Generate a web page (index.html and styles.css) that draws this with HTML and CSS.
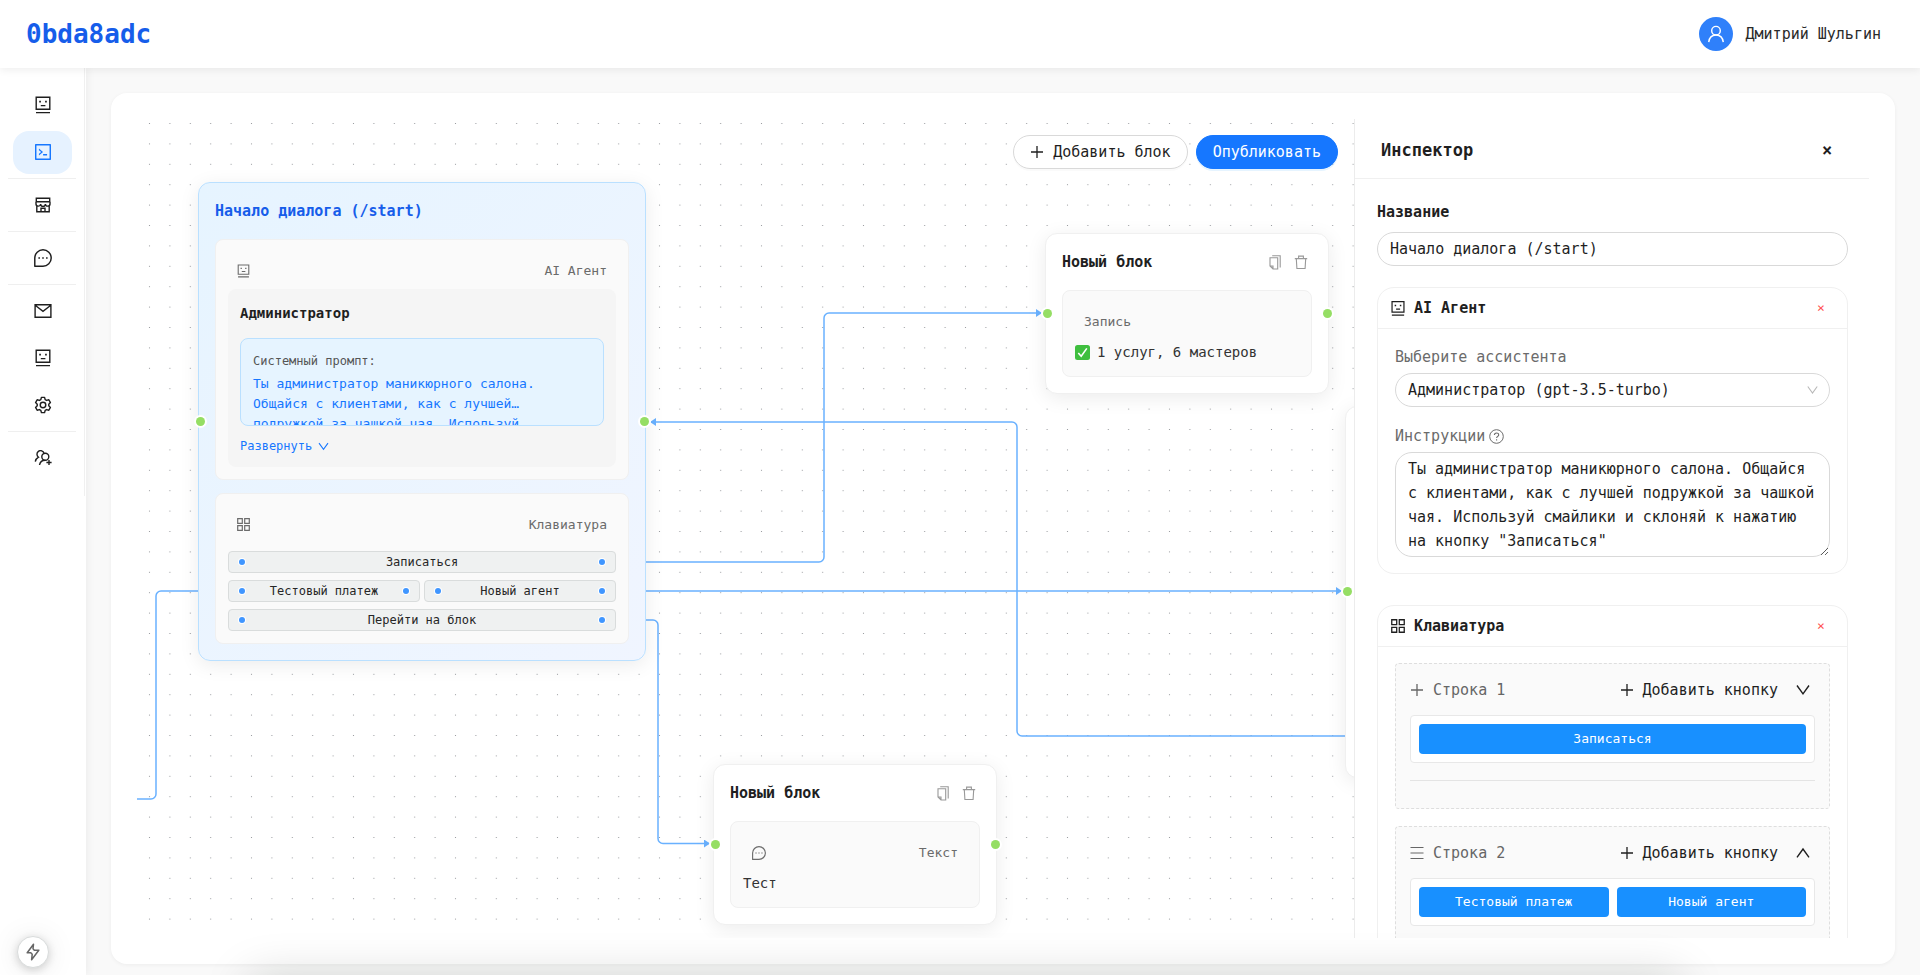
FILE: index.html
```html
<!DOCTYPE html>
<html lang="ru">
<head>
<meta charset="utf-8">
<title>0bda8adc</title>
<link rel="stylesheet" href="styles.css">
</head>
<body>
<svg class="sprite" aria-hidden="true">
  <symbol id="i-bot" viewBox="0 0 16 18"><path d="M1.2 1.2h13.6v12H1.2z M1 16.6h14 M5.8 9.6h4.6" fill="none" stroke="currentColor" stroke-width="1.4"/><path d="M4.2 4.8h1.7v1.7H4.2zM10.1 4.8h1.7v1.7h-1.7z" fill="currentColor"/></symbol>
  <symbol id="i-code" viewBox="112 112 800 800"><path fill="currentColor" d="M516 673c0 4.400 3.400 8 7.500 8h185c4.100 0 7.500-3.600 7.500-8v-48c0-4.400-3.400-8-7.500-8h-185c-4.100 0-7.500 3.600-7.500 8v48zm-194.900 6.100l192-161c3.800-3.200 3.800-9.100 0-12.300l-192-160.900A7.950 7.950 0 00308 351v62.700c0 2.400 1 4.600 2.900 6.100L420.700 512l-109.800 92.200a8.100 8.100 0 00-2.900 6.100V673c0 6.800 7.900 10.500 13.100 6.100zM880 112H144c-17.700 0-32 14.300-32 32v736c0 17.700 14.300 32 32 32h736c17.700 0 32-14.300 32-32V144c0-17.700-14.300-32-32-32zm-40 728H184V184h656v656z"/></symbol>
  <symbol id="i-shop" viewBox="0 0 16 16"><path d="M1.300 5V1.200h13.400V5M1 4.700h14M1 4.700v2a2.300 2.300 0 0 0 4.600.3 2.400 2.400 0 0 0 4.800 0A2.300 2.300 0 0 0 15 6.700v-2M1.800 8.800v5.900h12.400V8.800M6 14.500v-3.300h4v3.300" fill="none" stroke="currentColor" stroke-width="1.400"/></symbol>
  <symbol id="i-msg" viewBox="1 1 16 16"><path d="M1.700 16.300V9A7.300 7.300 0 1 1 9 16.300z" fill="none" stroke="currentColor" stroke-width="1.300" stroke-linejoin="round"/><path d="M4.900 8.300h1.400v1.400H4.900zM8.300 8.300h1.400v1.400H8.300zM11.700 8.300h1.400v1.400h-1.400z" fill="currentColor"/></symbol>
  <symbol id="i-mail" viewBox="0 0 18 14"><path d="M1.100.8h15.800v12.400H1.100zM1.500 1.500 9 7.300l7.500-5.800" fill="none" stroke="currentColor" stroke-width="1.400"/></symbol>
  <symbol id="i-gear" viewBox="0 0 24 24"><g fill="none" stroke="currentColor" stroke-width="1.900" stroke-linejoin="round"><circle cx="12" cy="12" r="3.700"/><path d="M9.900 1.800h4.200l.8 3 1.900 1.100 3-.9 2.100 3.700-2.200 2.200v2.200l2.200 2.200-2.100 3.700-3-.9-1.900 1.100-.8 3H9.900l-.8-3-1.900-1.100-3 .9-2.100-3.700 2.200-2.200v-2.200L2.100 8.700 4.200 5l3 .9 1.900-1.100z"/></g></symbol>
  <symbol id="i-users" viewBox="0 0 18 16"><g fill="none" stroke="currentColor" stroke-width="1.400"><circle cx="11.300" cy="6.700" r="3.500"/><path d="M10 3.200A3.600 3.600 0 1 0 4.500 7.200 6.200 6.200 0 0 0 1.300 11.700M11.300 10.200c-3.300 0-5.300 2-5.800 4.800M15 9.900v5.200M12.400 12.500h5.200"/></g></symbol>
  <symbol id="i-user" viewBox="0 0 18 18"><g fill="none" stroke="currentColor" stroke-width="1.400"><circle cx="9" cy="5.700" r="4.300"/><path d="M1.700 17.200c.5-4.300 3.200-7.200 7.300-7.200s6.800 2.900 7.300 7.200"/></g></symbol>
  <symbol id="i-bolt" viewBox="0 0 14 18"><path d="M7.500 1.200 1.200 9.800h3.600l1.400 1.500-.6 5.500 7.200-9.600H8.300L7 5.800z" fill="none" stroke="currentColor" stroke-width="1.500" stroke-linejoin="round"/></symbol>
  <symbol id="i-grid" viewBox="0 0 13 13"><path d="M.7.700h4.600v4.600H.7zM7.700.700h4.600v4.600H7.700zM.7 7.700h4.600v4.600H.7zM7.700 7.700h4.600v4.600H7.700z" fill="none" stroke="currentColor" stroke-width="1.200"/></symbol>
  <symbol id="i-copy" viewBox="0 0 14 15"><path d="M2 2.800h7.700v11.200H5L2 11zM2 11h3v3M4.200.700h8v11.800" fill="none" stroke="currentColor" stroke-width="1.100"/></symbol>
  <symbol id="i-trash" viewBox="0 0 14 15"><path d="M.8 3.600h12.400M2.300 3.600l.6 9.900h8.200l.6-9.900M4.600 3.400V1.100h4.800v2.300" fill="none" stroke="currentColor" stroke-width="1.100"/></symbol>
  <symbol id="i-plus" viewBox="0 0 14 14"><path d="M7 1v12M1 7h12" fill="none" stroke="currentColor" stroke-width="1.300"/></symbol>
  <symbol id="i-menu" viewBox="0 0 14 14"><path d="M.5 1.500h13M.5 7h13M.5 12.500h13" fill="none" stroke="currentColor" stroke-width="1.200"/></symbol>
  <symbol id="i-down" viewBox="0 0 14 12"><path d="M1 1.500 7 9.800l6-8.300" fill="none" stroke="currentColor" stroke-width="1.400"/></symbol>
  <symbol id="i-up" viewBox="0 0 14 12"><path d="M1 10.300 7 2l6 8.300" fill="none" stroke="currentColor" stroke-width="1.400"/></symbol>
  <symbol id="i-help" viewBox="0 0 15 15"><circle cx="7.500" cy="7.500" r="6.800" fill="none" stroke="currentColor"/><path d="M5.400 6.100c0-2.900 4.300-2.800 4.300-.2 0 1.500-2.100 1.500-2.100 3.200M7.600 10.300v1.200" fill="none" stroke="currentColor" stroke-width="1.100"/></symbol>
  <symbol id="i-check" viewBox="0 0 15 15"><rect width="15" height="15" rx="2.500" fill="#3fbf3f"/><path d="M3.300 8 6.200 11.300 11.800 3.400" fill="none" stroke="#fff" stroke-width="1.600"/></symbol>
</svg>

<header class="topbar">
  <a class="brand" href="#">0bda8adc</a>
  <div class="user">
    <span class="avatar"><svg width="18" height="18"><use href="#i-user"/></svg></span>
    <span class="user-name">Дмитрий Шульгин</span>
  </div>
</header>

<div class="shell">
  <aside class="side">
    <nav class="menu">
      <a href="#" class="item" aria-label="Ассистенты"><svg width="16" height="18"><use href="#i-bot"/></svg></a>
      <a href="#" class="item active" aria-label="Сценарии"><svg width="16" height="16"><use href="#i-code"/></svg></a>
      <hr>
      <a href="#" class="item" aria-label="Магазин"><svg width="16" height="16"><use href="#i-shop"/></svg></a>
      <hr>
      <a href="#" class="item" aria-label="Диалоги"><svg width="18" height="18"><use href="#i-msg"/></svg></a>
      <hr>
      <a href="#" class="item" aria-label="Рассылки"><svg width="18" height="14"><use href="#i-mail"/></svg></a>
      <a href="#" class="item" aria-label="Боты"><svg width="16" height="18"><use href="#i-bot"/></svg></a>
      <a href="#" class="item" aria-label="Настройки"><svg width="18" height="18"><use href="#i-gear"/></svg></a>
      <hr>
      <a href="#" class="item" aria-label="Пользователи"><svg width="18" height="16"><use href="#i-users"/></svg></a>
    </nav>
    <button class="bolt" aria-label="Быстрые действия"><svg width="14" height="18"><use href="#i-bolt"/></svg></button>
  </aside>

  <main class="main">
    <div class="panel">
      <section class="canvas" aria-label="Сценарий">
        <svg class="layer" width="100%" height="100%">
          <defs>
            <pattern id="dots" x="2.300" y="-5.700" width="20.400" height="20.400" patternUnits="userSpaceOnUse"><circle cx="10.200" cy="10.200" r=".6" fill="#8d8f94"/></pattern>
            <marker id="arrow" markerWidth="6" markerHeight="8" refX="5" refY="4" orient="auto" markerUnits="userSpaceOnUse"><path d="M0 0 6 4 0 8z" fill="#69b1ff"/></marker>
          </defs>
          <rect width="100%" height="100%" fill="url(#dots)"/>
          <g fill="none" stroke="#69b1ff" stroke-width="1.500">
            <path marker-end="url(#arrow)" d="M505 443H682a5 5 0 0 0 5-5V199a5 5 0 0 1 5-5H904"/>
            <path marker-end="url(#arrow)" d="M505 472H1204"/>
            <path marker-end="url(#arrow)" d="M505 501H516a5 5 0 0 1 5 5V719.500a5 5 0 0 0 5 5H572"/>
            <path marker-end="url(#arrow)" d="M1215 617H885a5 5 0 0 1-5-5V308a5 5 0 0 0-5-5H514"/>
            <path d="M0 680H14a5 5 0 0 0 5-5V477a5 5 0 0 1 5-5H70"/>
          </g>
        </svg>

        <article class="node start n1">
          <i class="port in"></i><i class="port out"></i>
          <header class="node-head"><h3>Начало диалога (/start)</h3></header>
          <div class="block">
            <div class="block-head"><svg width="13" height="14"><use href="#i-bot"/></svg><span>AI Агент</span></div>
            <div class="agent">
              <h4>Администратор</h4>
              <div class="prompt">
                <span class="prompt-label">Системный промпт:</span>
                <p>Ты администратор маникюрного салона.<br>Общайся с клиентами, как с лучшей…<br>подружкой за чашкой чая. Используй</p>
              </div>
              <button class="expand">Развернуть <svg width="11" height="9"><use href="#i-down"/></svg></button>
            </div>
          </div>
          <div class="block">
            <div class="block-head"><svg width="13" height="13"><use href="#i-grid"/></svg><span>Клавиатура</span></div>
            <div class="keys">
              <div class="keys-row"><div class="key"><i></i>Записаться<i></i></div></div>
              <div class="keys-row"><div class="key"><i></i>Тестовый платеж<i></i></div><div class="key"><i></i>Новый агент<i></i></div></div>
              <div class="keys-row"><div class="key"><i></i>Перейти на блок<i></i></div></div>
            </div>
          </div>
        </article>

        <article class="node n2">
          <i class="port in"></i><i class="port out"></i>
          <header class="node-head"><h3>Новый блок</h3>
            <button aria-label="Копировать"><svg width="14" height="15"><use href="#i-copy"/></svg></button>
            <button aria-label="Удалить"><svg width="14" height="15"><use href="#i-trash"/></svg></button>
          </header>
          <div class="block">
            <div class="block-head"><span>Запись</span></div>
            <p class="line"><svg width="15" height="15"><use href="#i-check"/></svg>1 услуг, 6 мастеров</p>
          </div>
        </article>

        <article class="node n3">
          <i class="port in"></i><i class="port out"></i>
          <header class="node-head"><h3>Новый блок</h3>
            <button aria-label="Копировать"><svg width="14" height="15"><use href="#i-copy"/></svg></button>
            <button aria-label="Удалить"><svg width="14" height="15"><use href="#i-trash"/></svg></button>
          </header>
          <div class="block">
            <div class="block-head"><svg width="14" height="14"><use href="#i-msg"/></svg><span>Текст</span></div>
            <p class="line">Тест</p>
          </div>
        </article>

        <article class="node n4"><i class="port in"></i></article>

        <div class="toolbar">
          <button class="btn"><svg width="14" height="14"><use href="#i-plus"/></svg>Добавить блок</button>
          <button class="btn primary">Опубликовать</button>
        </div>
      </section>

      <aside class="inspector">
        <header class="ins-head"><h2>Инспектор</h2><button class="close" aria-label="Закрыть">×</button></header>
        <div class="ins-body">
          <label class="field-title" for="name">Название</label>
          <input class="control" id="name" type="text" value="Начало диалога (/start)">

          <section class="card">
            <header class="card-head"><svg width="14" height="17"><use href="#i-bot"/></svg><h3>AI Агент</h3><button class="remove" aria-label="Удалить">×</button></header>
            <div class="card-body">
              <label class="label" for="assistant">Выберите ассистента</label>
              <div class="select">
                <select class="control" id="assistant"><option>Администратор (gpt-3.5-turbo)</option></select>
                <svg width="11" height="10"><use href="#i-down"/></svg>
              </div>
              <label class="label second" for="instr">Инструкции<svg width="15" height="15"><use href="#i-help"/></svg></label>
              <textarea class="control" id="instr" rows="4">Ты администратор маникюрного салона. Общайся с клиентами, как с лучшей подружкой за чашкой чая. Используй смайлики и склоняй к нажатию на кнопку "Записаться"</textarea>
            </div>
          </section>

          <section class="card">
            <header class="card-head"><svg width="14" height="14"><use href="#i-grid"/></svg><h3>Клавиатура</h3><button class="remove" aria-label="Удалить">×</button></header>
            <div class="card-body">
              <div class="row">
                <div class="row-head"><svg width="14" height="14"><use href="#i-plus"/></svg><span>Строка 1</span>
                  <button class="ghost"><svg width="14" height="14"><use href="#i-plus"/></svg>Добавить кнопку</button>
                  <button class="toggle" aria-label="Развернуть"><svg width="14" height="12"><use href="#i-down"/></svg></button></div>
                <div class="row-box"><button>Записаться</button></div>
                <hr>
              </div>
              <div class="row">
                <div class="row-head"><svg width="14" height="14"><use href="#i-menu"/></svg><span>Строка 2</span>
                  <button class="ghost"><svg width="14" height="14"><use href="#i-plus"/></svg>Добавить кнопку</button>
                  <button class="toggle" aria-label="Свернуть"><svg width="14" height="12"><use href="#i-up"/></svg></button></div>
                <div class="row-box"><button>Тестовый платеж</button><button>Новый агент</button></div>
                <hr>
              </div>
            </div>
          </section>
        </div>
      </aside>
    </div>
  </main>
</div>
<div class="bottom-shade"></div>
</body>
</html>
```

FILE: styles.css
```css
* { box-sizing: border-box; }

body {
  margin: 0;
  height: 100vh;
  display: flex;
  flex-direction: column;
  overflow: hidden;
  background: #f9f9f9;
  color: #1f1f1f;
  font: 15px/24px "DejaVu Sans Mono", "Liberation Mono", monospace;
}

h2, h3, h4, p { margin: 0; }
svg { flex: none; display: block; }
button, input, select, textarea { font: inherit; color: inherit; }
button { border: 0; padding: 0; background: none; cursor: pointer; }
a { color: inherit; text-decoration: none; }
.sprite { position: absolute; width: 0; height: 0; }

/* Top bar */
.topbar {
  flex: none;
  height: 68px;
  padding: 0 39px 0 26px;
  display: flex;
  align-items: center;
  justify-content: space-between;
  background: #fff;
  box-shadow: 0 2px 8px rgba(0, 0, 0, .07);
  z-index: 2;
}
.brand { font-size: 26px; font-weight: 700; color: #165dea; }
.user { display: flex; align-items: center; gap: 13px; }
.avatar {
  width: 34px;
  height: 34px;
  border-radius: 50%;
  display: grid;
  place-items: center;
  color: #fff;
  background: #2f80fa;
}
.user-name { color: #2a2a2a; }

/* Side menu */
.shell { flex: 1; min-height: 0; display: flex; }
.side {
  flex: none;
  width: 86px;
  display: flex;
  flex-direction: column;
  justify-content: space-between;
  background: #fff;
  box-shadow: 2px 0 8px rgba(0, 0, 0, .05);
}
.menu {
  margin-right: 1px;
  display: flex;
  flex-direction: column;
  gap: 4px;
  padding: 16px 12px 16px 13px;
  border-right: 1px solid #f0f0f0;
}
.menu hr {
  width: 68px;
  height: 1px;
  margin: 0 -5px 1px;
  border: 0;
  background: #efefef;
}
.item {
  height: 43px;
  padding-bottom: 2px;
  display: grid;
  place-items: center;
  border-radius: 16px;
}
.item.active { background: #e6f2ff; color: #1677ff; }
.bolt {
  width: 32px;
  height: 32px;
  margin: 0 0 7px 17px;
  display: grid;
  place-items: center;
  border: 1px solid #d9dcdc;
  border-radius: 50%;
  background: #fff;
  color: #666;
  box-shadow: 0 2px 8px rgba(0, 0, 0, .16), 0 2px 30px rgba(0, 0, 0, .1);
}

/* Main panel */
.main { flex: 1; min-width: 0; padding: 25px 25px 11px; display: flex; }
.panel {
  flex: 1;
  min-width: 0;
  padding: 26px;
  display: flex;
  border-radius: 16px;
  background: #fff;
  box-shadow: 0 1px 4px rgba(0, 0, 0, .05);
}
.canvas { position: relative; flex: 1; min-width: 0; overflow: hidden; }
.layer { position: absolute; inset: 0; }

.toolbar { position: absolute; top: 16px; right: 16px; display: flex; gap: 8px; }
.btn {
  height: 34px;
  padding: 0 16px;
  display: flex;
  align-items: center;
  gap: 9px;
  border: 1px solid #d9d9d9;
  border-radius: 17px;
  background: #fff;
  box-shadow: 0 2px 0 rgba(0, 0, 0, .02);
}
.btn.primary {
  background: #1677ff;
  border-color: #1677ff;
  color: #fff;
  box-shadow: 0 2px 0 rgba(5, 145, 255, .1);
}

/* Nodes */
.node {
  position: absolute;
  width: 284px;
  padding: 16px;
  border: 1px solid #f0f0f0;
  border-radius: 12px;
  background: #fff;
  box-shadow: 0 4px 20px rgba(0, 0, 0, .08);
}
.n1 { left: 61px; top: 63px; }
.n2 { left: 908px; top: 114px; }
.n3 { left: 576px; top: 645px; }
.n4 { left: 1208px; top: 287px; height: 372px; }
.node.start {
  width: 448px;
  border-color: #bae0ff;
  background: linear-gradient(135deg, #e6f4ff, #f0f5ff);
}
.node-head { display: flex; align-items: center; gap: 12px; margin-bottom: 16px; }
.node-head h3 { flex: 1; font-size: 15px; font-weight: 700; }
.node-head button { color: #999; }
.node-head button:last-child { margin-right: 4px; }
.start h3 { color: #165dea; }

.port {
  position: absolute;
  top: 50%;
  width: 9px;
  height: 9px;
  margin-top: -5px;
  border-radius: 50%;
  background: #95de64;
  box-shadow: 0 0 0 2px #fff;
}
.port.in { left: -3px; }
.port.out { right: -4px; }

.block {
  padding: 12px;
  border: 1px solid #f0f0f0;
  border-radius: 8px;
  background: #fafafa;
}
.block + .block { margin-top: 13px; }
.block-head {
  height: 37px;
  padding: 0 9px;
  display: flex;
  align-items: center;
  justify-content: space-between;
  font-size: 13px;
  color: #6b6b6b;
}
.line { display: flex; align-items: center; gap: 7px; font-size: 14px; color: #333; }
.agent { padding: 12px 12px 10px; border-radius: 8px; background: #f5f5f5; }
.agent h4 { font-size: 14px; font-weight: 700; }
.prompt {
  height: 88px;
  margin: 13px 0 10px;
  padding: 12px;
  overflow: hidden;
  border: 1px solid #bae0ff;
  border-radius: 8px;
  background: #e6f4ff;
  font-size: 13px;
  line-height: 20px;
  white-space: nowrap;
}
.prompt-label { display: block; margin-bottom: 3px; font-size: 12px; color: #555; }
.prompt p { color: #1677ff; }
.expand {
  display: flex;
  align-items: center;
  gap: 6px;
  font-size: 12px;
  line-height: 21px;
  color: #1677ff;
}

.keys { margin-top: 8px; display: grid; gap: 7px; }
.keys-row { display: flex; gap: 4px; }
.key {
  flex: 1 1 0;
  height: 22px;
  padding: 0 10px;
  display: flex;
  align-items: center;
  justify-content: space-between;
  border: 1px solid #d9dcdc;
  border-radius: 4px;
  background: #eff1f1;
  font-size: 12px;
  color: #262626;
}
.key i {
  width: 6px;
  height: 6px;
  border-radius: 50%;
  background: #4096ff;
  box-shadow: 0 0 0 1px #fff;
}

/* Inspector */
.inspector {
  flex: none;
  width: 515px;
  display: flex;
  flex-direction: column;
  border-left: 1px solid #ececec;
  background: #fff;
}
.ins-head {
  flex: none;
  height: 60px;
  padding: 2px 26px 0;
  display: flex;
  align-items: center;
  justify-content: space-between;
  border-bottom: 1px solid #f0f0f0;
}
.ins-head h2 { font-size: 17px; font-weight: 700; }
.close { width: 32px; height: 32px; font-size: 17px; font-weight: 700; }
.ins-body { flex: 1; min-height: 0; overflow: hidden; padding: 21px 21px 0 22px; }
.field-title { display: block; margin-bottom: 8px; font-weight: 700; }
.control {
  display: block;
  width: 100%;
  height: 34px;
  padding: 0 12px;
  border: 1px solid #d9d9d9;
  border-radius: 17px;
  background: #fff;
  outline: 0;
}
textarea.control { height: 105px; padding: 4px 12px 3px; line-height: 24px; overflow: hidden; resize: vertical; }
.select { position: relative; }
.select .control { appearance: none; }
.select svg { position: absolute; right: 12px; top: 12px; color: #b8b8b8; pointer-events: none; }

.card { margin-top: 21px; border: 1px solid #f0f0f0; border-radius: 17px; }
.card + .card { margin-top: 31px; }
.card-head {
  height: 41px;
  padding: 0 13px;
  display: flex;
  align-items: center;
  gap: 9px;
  border-bottom: 1px solid #f0f0f0;
}
.card-head h3 { flex: 1; font-size: 15px; font-weight: 700; }
.remove { width: 26px; height: 26px; font-size: 13px; color: #ff4d4f; }
.card-body { padding: 16px 17px; }
.label { display: flex; align-items: center; gap: 4px; margin-bottom: 4px; color: #6b6b6b; }
.label.second { margin-top: 17px; }

.row {
  padding: 10px 14px 27px;
  border: 1px dashed #dedede;
  border-radius: 4px;
  background: #fafafa;
}
.row + .row { margin-top: 17px; }
.row-head { height: 32px; display: flex; align-items: center; gap: 9px; color: #666; }
.row-head span { flex: 1; }
.ghost { margin-right: 4px; display: flex; align-items: center; gap: 9px; color: #1f1f1f; }
.toggle { width: 24px; height: 24px; display: grid; place-items: center; color: #1f1f1f; }
.row-box {
  margin: 9px 0 17px;
  padding: 8px;
  display: flex;
  gap: 8px;
  border: 1px solid #e8e8e8;
  border-radius: 4px;
  background: #fff;
}
.row-box button {
  flex: 1 1 0;
  height: 30px;
  border-radius: 4px;
  background: #1890ff;
  color: #fff;
  font-size: 13px;
}
.row hr { margin: 0; border: 0; height: 1px; background: #e4e4e4; }

/* Soft shade of the sheet docked under the window */
.bottom-shade {
  position: fixed;
  left: 250px;
  right: 240px;
  bottom: -104px;
  height: 100px;
  box-shadow: 0 0 48px rgba(0, 20, 10, .18);
  pointer-events: none;
}
```
